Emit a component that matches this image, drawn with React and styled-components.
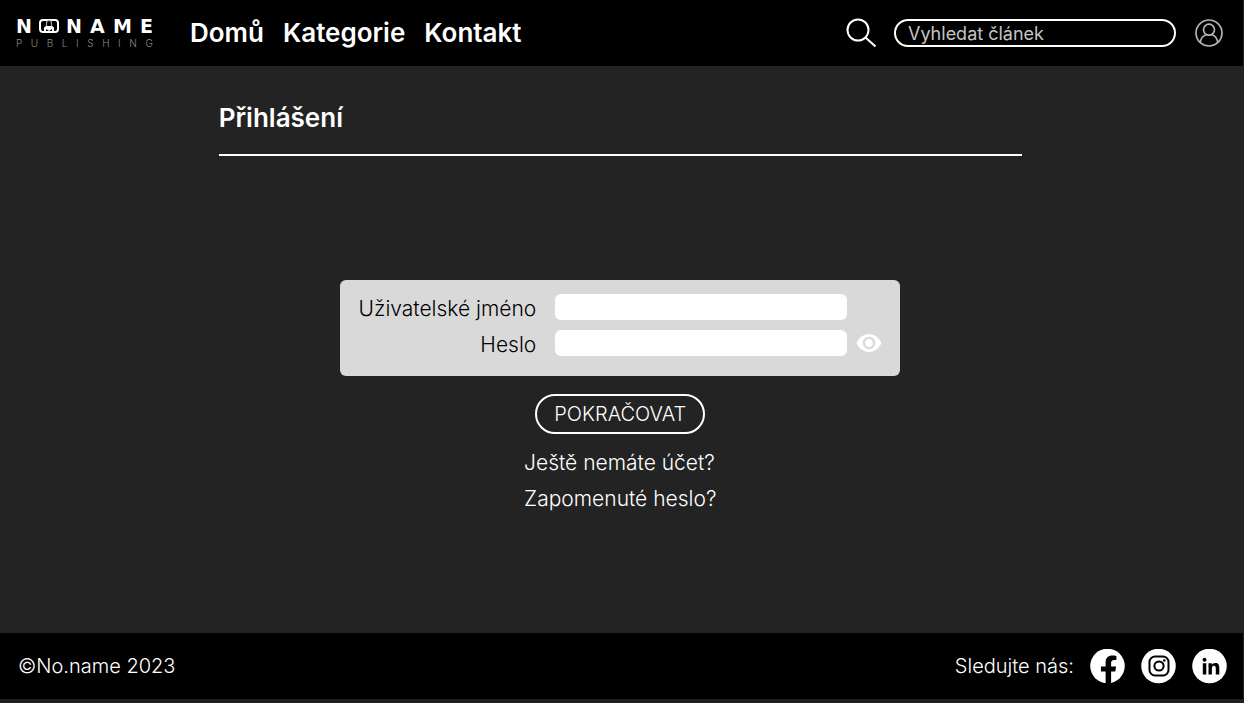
import React, { useState } from "react";
import styled, { createGlobalStyle } from "styled-components";

const Global = createGlobalStyle`
  *, *::before, *::after { box-sizing: border-box; }
  body {
    margin: 0;
    background: #231f20;
    color: #fff;
    font-family: Inter, "Noto Sans", sans-serif;
  }
  button, input { font: inherit; color: inherit; }
`;

const Page = styled.div`
  display: flex;
  flex-direction: column;
  min-height: 100vh;
  padding: 0 1px 4px 0;
`;

const Header = styled.header`
  display: flex;
  align-items: center;
  height: 66px;
  padding: 0 20px 0 16px;
  background: #000;
`;

const Logo = styled.a`
  display: block;
  width: 137px;
  padding-bottom: 2px;
  color: #fff;
  text-decoration: none;
`;

const LogoName = styled.span`
  display: flex;
  align-items: center;
  justify-content: space-between;
  font: 700 19px/22px "DejaVu Sans", sans-serif;
`;

const LogoLetters = styled.span`
  display: flex;
  flex: 0 0 ${(p) => p.$width}px;
  justify-content: space-between;
`;

const LogoTagline = styled.span`
  display: flex;
  justify-content: space-between;
  color: #8a8a8a;
  font: 300 10px/12px Inter, sans-serif;
`;

const Nav = styled.nav`
  display: flex;
  gap: 19px;
  margin-left: 37px;
`;

const NavLink = styled.a`
  color: #fff;
  font-size: 26px;
  font-weight: 600;
  line-height: 32px;
  text-decoration: none;
`;

const Search = styled.form`
  display: flex;
  align-items: center;
  gap: 17px;
  margin-left: auto;
`;

const IconButton = styled.button`
  display: flex;
  padding: 0;
  border: 0;
  background: none;
  cursor: pointer;
`;

const SearchInput = styled.input`
  width: 282px;
  height: 28px;
  padding: 0 12px;
  border: 2px solid #fff;
  border-radius: 14px;
  background: #000;
  font-size: 18px;
  &::placeholder { color: #c4c4c4; opacity: 1; }
`;

const Profile = styled.a`
  display: flex;
  margin-left: 19px;
`;

const Main = styled.main`
  flex: 1;
  padding: 36px 17.8% 0 17.6%;
  background: #232323;
`;

const Title = styled.h1`
  margin: 0;
  padding-bottom: 20px;
  border-bottom: 2px solid #fff;
  font-size: 26px;
  font-weight: 600;
  line-height: 32px;
`;

const LoginForm = styled.form`
  display: flex;
  flex-direction: column;
  align-items: center;
  margin-top: 124px;
`;

const Panel = styled.div`
  display: grid;
  grid-template-columns: 180px 292px 16px;
  column-gap: 19px;
  row-gap: 10px;
  align-items: center;
  padding: 14px 18px 20px 16px;
  border-radius: 6px;
  background: #d9d9d9;
`;

const Label = styled.label`
  padding-top: 4px;
  color: #000;
  font-size: 21px;
  font-weight: 350;
  line-height: 22px;
  text-align: right;
  white-space: nowrap;
`;

const Field = styled.input`
  width: 100%;
  height: 26px;
  padding: 0 8px;
  border: 0;
  border-radius: 6px;
  background: #fff;
  color: #000;
  font-size: 18px;
`;

const Reveal = styled(IconButton)`
  grid-column: 3;
  margin-left: -10px;
`;

const Submit = styled.button`
  height: 40px;
  margin-top: 18px;
  padding: 0 17px;
  border: 2px solid #fff;
  border-radius: 20px;
  background: transparent;
  font-size: 20px;
  font-weight: 300;
  cursor: pointer;
`;

const Links = styled.div`
  display: flex;
  flex-direction: column;
  gap: 10px;
  margin-top: 16px;
`;

const TextLink = styled.a`
  color: #fff;
  font-size: 21px;
  font-weight: 350;
  line-height: 26px;
  text-decoration: none;
`;

const Footer = styled.footer`
  display: flex;
  align-items: center;
  height: 66px;
  padding: 0 16px 0 18px;
  background: #000;
  font-size: 20px;
  font-weight: 300;
  line-height: 26px;
`;

const Social = styled.div`
  display: flex;
  align-items: center;
  gap: 16px;
  margin-left: auto;
`;

const SocialLink = styled.a`
  display: flex;
`;

const LockO = () => (
  <svg width="20" height="16" viewBox="0 0 20 16" aria-hidden="true">
    <rect x="1" y="2" width="18" height="12" rx="3" fill="none" stroke="#fff" strokeWidth="2" />
    <path d="M7.500 8.500V5a2.500 2.500 0 0 1 5 0v3.500" fill="none" stroke="#aaa" strokeWidth="1.200" />
    <path d="M5 14V9.500L7 8h6l2 1.500V14h-2v-3l-3 2-3-2v3z" fill="#fff" />
  </svg>
);

const SearchIcon = () => (
  <svg width="32" height="30" viewBox="0 0 32 30" fill="none" stroke="#fff" strokeWidth="2" aria-hidden="true">
    <circle cx="13" cy="12" r="10.500" />
    <path d="M20.500 19.500 30.500 28.500" />
  </svg>
);

const UserIcon = () => (
  <svg width="28" height="28" viewBox="0 0 28 28" fill="none" stroke="#b4b4b4" strokeWidth="1.700" aria-hidden="true">
    <circle cx="14" cy="14" r="13" />
    <circle cx="14" cy="10.700" r="5.500" />
    <path d="M5.200 23.500c.7-4.400 3.400-7.200 6.300-8M22.800 23.500c-.7-4.400-3.400-7.200-6.300-8" />
  </svg>
);

const EyeIcon = () => (
  <svg width="26" height="20" viewBox="0 0 26 20" aria-hidden="true">
    <path d="M.5 10C3 4.500 7.500 1 13 1s10 3.500 12.500 9C23 15.500 18.500 19 13 19S3 15.500.5 10z" fill="#fff" />
    <circle cx="13" cy="10" r="5.100" fill="#fff" stroke="#d9d9d9" strokeWidth="2.400" />
  </svg>
);

const FacebookIcon = () => (
  <svg width="35" height="35" viewBox="0 0 35 35" aria-hidden="true">
    <circle cx="17.500" cy="17" r="17.300" fill="#fff" />
    <path d="M15.600 35V22.500h-4.700v-5h4.700v-4c0-4.500 2.700-7 6.700-7 1.400 0 2.800.2 4.100.4V11h-2.300c-2.300 0-3 1.400-3 2.900v3.600h5l-.8 5h-4.200V35z" fill="#000" />
  </svg>
);

const InstagramIcon = () => (
  <svg width="35" height="35" viewBox="0 0 35 35" aria-hidden="true">
    <circle cx="17.500" cy="17" r="17.300" fill="#fff" />
    <g fill="none" stroke="#000" strokeWidth="2">
      <rect x="8.500" y="7.500" width="19" height="19" rx="5.500" />
      <circle cx="18" cy="17" r="4.600" />
    </g>
    <circle cx="23.300" cy="11.500" r="1.300" fill="#000" />
  </svg>
);

const LinkedinIcon = () => (
  <svg width="35" height="35" viewBox="0 0 35 35" aria-hidden="true">
    <circle cx="17.500" cy="17" r="17.300" fill="#fff" />
    <circle cx="12.500" cy="10.800" r="2" fill="#000" />
    <path d="M10.800 14.200h3.500v11.300h-3.500zM16.500 14.200h3.300v1.600c.6-1.100 1.900-1.900 3.500-1.900 3.200 0 4 2.100 4 5v6.600h-3.500v-5.700c0-1.500-.2-3-1.900-3s-2 1.500-2 3v5.700h-3.400z" fill="#000" />
  </svg>
);

export default function App() {
  const [revealed, setRevealed] = useState(false);
  return (
    <>
      <Global />
      <Page>
        <Header>
          <Logo href="#" aria-label="No Name Publishing">
            <LogoName>
              <span>N</span>
              <LockO />
              <LogoLetters $width={87}>
                {[..."NAME"].map((c) => <span key={c}>{c}</span>)}
              </LogoLetters>
            </LogoName>
            <LogoTagline>
              {[..."PUBLISHING"].map((c, i) => <span key={i}>{c}</span>)}
            </LogoTagline>
          </Logo>
          <Nav>
            <NavLink href="#">Domů</NavLink>
            <NavLink href="#">Kategorie</NavLink>
            <NavLink href="#">Kontakt</NavLink>
          </Nav>
          <Search role="search" onSubmit={(e) => e.preventDefault()}>
            <IconButton type="submit" aria-label="Hledat"><SearchIcon /></IconButton>
            <SearchInput type="search" aria-label="Vyhledat článek" placeholder="Vyhledat článek" />
          </Search>
          <Profile href="#" aria-label="Profil"><UserIcon /></Profile>
        </Header>
        <Main>
          <Title>Přihlášení</Title>
          <LoginForm onSubmit={(e) => e.preventDefault()}>
            <Panel>
              <Label htmlFor="user">Uživatelské jméno</Label>
              <Field id="user" type="text" autoComplete="username" />
              <span />
              <Label htmlFor="password">Heslo</Label>
              <Field id="password" type={revealed ? "text" : "password"} autoComplete="current-password" />
              <Reveal type="button" aria-label="Zobrazit heslo" aria-pressed={revealed} onClick={() => setRevealed(!revealed)}>
                <EyeIcon />
              </Reveal>
            </Panel>
            <Submit type="submit">POKRAČOVAT</Submit>
            <Links>
              <TextLink href="#">Ještě nemáte účet?</TextLink>
              <TextLink href="#">Zapomenuté heslo?</TextLink>
            </Links>
          </LoginForm>
        </Main>
        <Footer>
          <span>©No.name 2023</span>
          <Social>
            <span>Sledujte nás:</span>
            <SocialLink href="#" aria-label="Facebook"><FacebookIcon /></SocialLink>
            <SocialLink href="#" aria-label="Instagram"><InstagramIcon /></SocialLink>
            <SocialLink href="#" aria-label="LinkedIn"><LinkedinIcon /></SocialLink>
          </Social>
        </Footer>
      </Page>
    </>
  );
}
